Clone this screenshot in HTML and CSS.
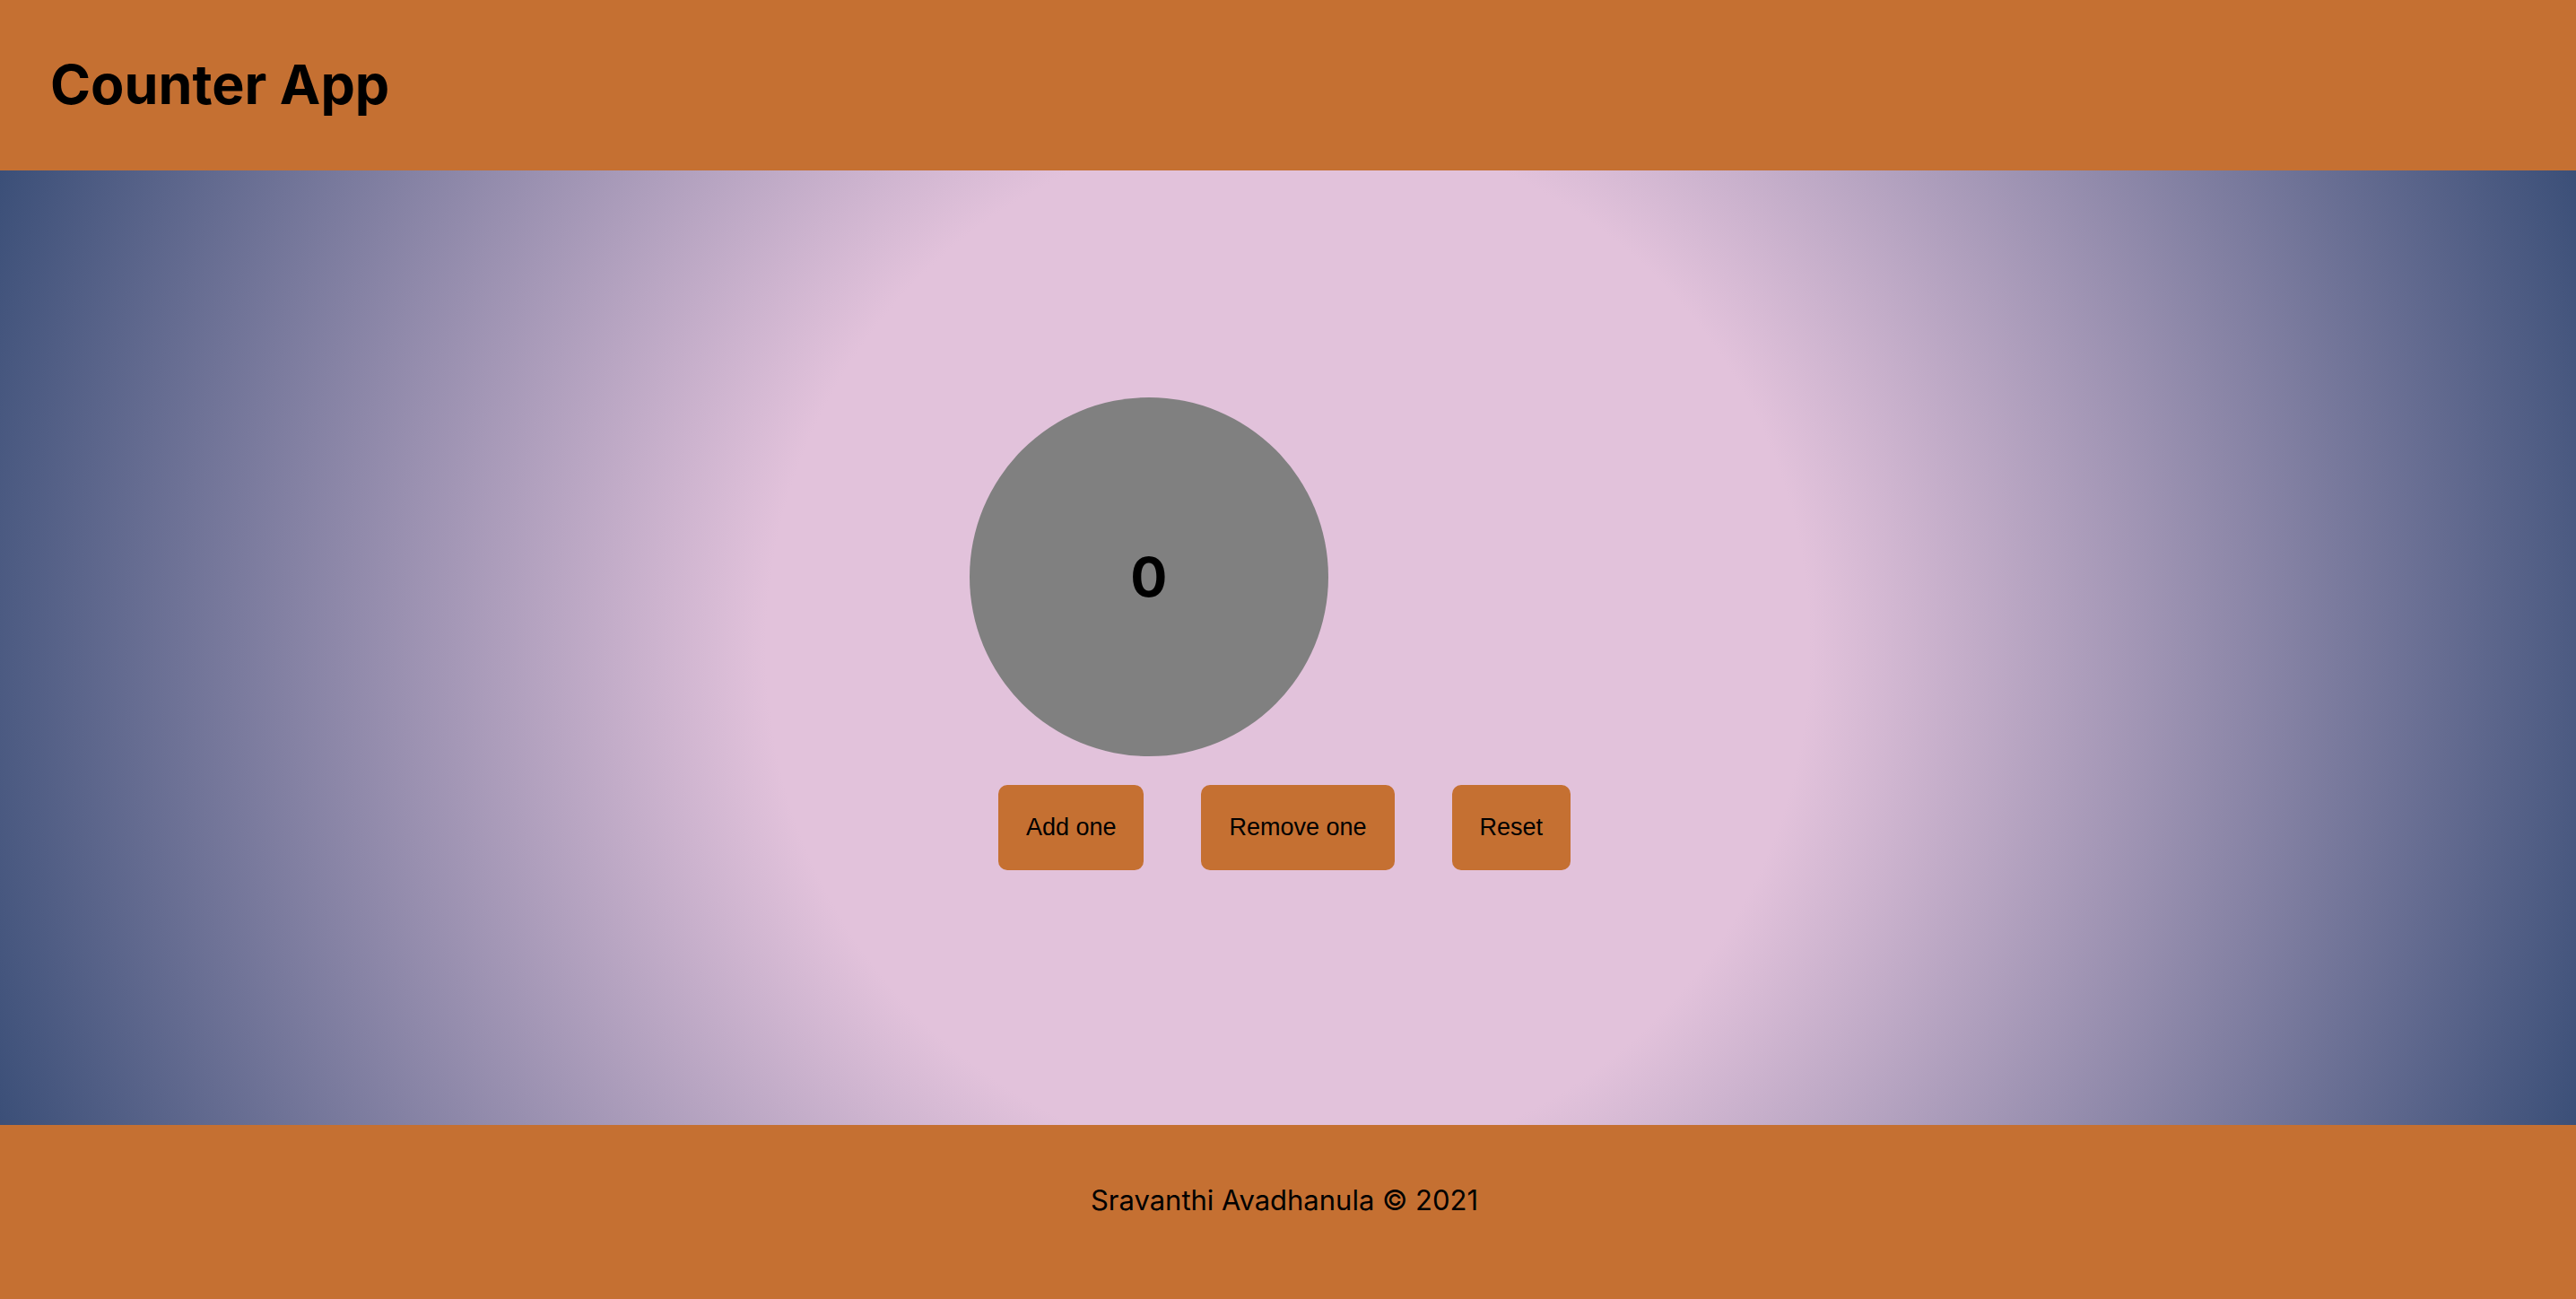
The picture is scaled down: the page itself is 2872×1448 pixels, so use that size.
FILE: index.html
```html
<!DOCTYPE html>
<html lang="en">
<head>
  <meta charset="utf-8">
  <meta name="viewport" content="width=device-width, initial-scale=1">
  <title>Counter App</title>
  <link rel="stylesheet" href="styles.css">
</head>
<body>
  <header class="header">
    <h1 class="title">Counter App</h1>
  </header>
  <main class="main">
    <div class="counter">
      <output class="count" id="count">0</output>
      <div class="actions">
        <button class="button" type="button">Add one</button>
        <button class="button" type="button">Remove one</button>
        <button class="button" type="button">Reset</button>
      </div>
    </div>
  </main>
  <footer class="footer">
    <p class="credit">Sravanthi Avadhanula © 2021</p>
  </footer>
</body>
</html>
```

FILE: styles.css
```css
* {
  box-sizing: border-box;
}

body {
  margin: 0;
  min-height: 100vh;
  display: flex;
  flex-direction: column;
  font-family: Inter, "Liberation Sans", sans-serif;
  color: #000;
}

.header {
  padding: 55px 56px 57px;
  background: #c57032;
}

.title {
  margin: 0;
  font-size: 61px;
  line-height: 78px;
  font-weight: 700;
}

.main {
  flex: 1;
  display: flex;
  align-items: center;
  justify-content: center;
  padding-right: 8px;
  background: radial-gradient(circle, #e2c2db 38%, #3b4f78 100%);
}

.counter {
  display: flex;
  flex-direction: column;
  align-items: flex-start;
}

.count {
  display: flex;
  align-items: center;
  justify-content: center;
  width: 400px;
  height: 400px;
  border-radius: 50%;
  background: #808080;
  font-size: 61px;
  font-weight: 700;
}

.actions {
  display: flex;
  gap: 64px;
  padding: 32px;
}

.button {
  padding: 32px 31px;
  border: 0;
  border-radius: 10px;
  background: #c57032;
  color: #000;
  font-family: "Liberation Sans", Arial, sans-serif;
  font-size: 27px;
  line-height: 31px;
  cursor: pointer;
}

.footer {
  padding: 64px 8px 90px 0;
  background: #c57032;
  text-align: center;
}

.credit {
  margin: 0;
  font-size: 31px;
  line-height: 40px;
}
```
